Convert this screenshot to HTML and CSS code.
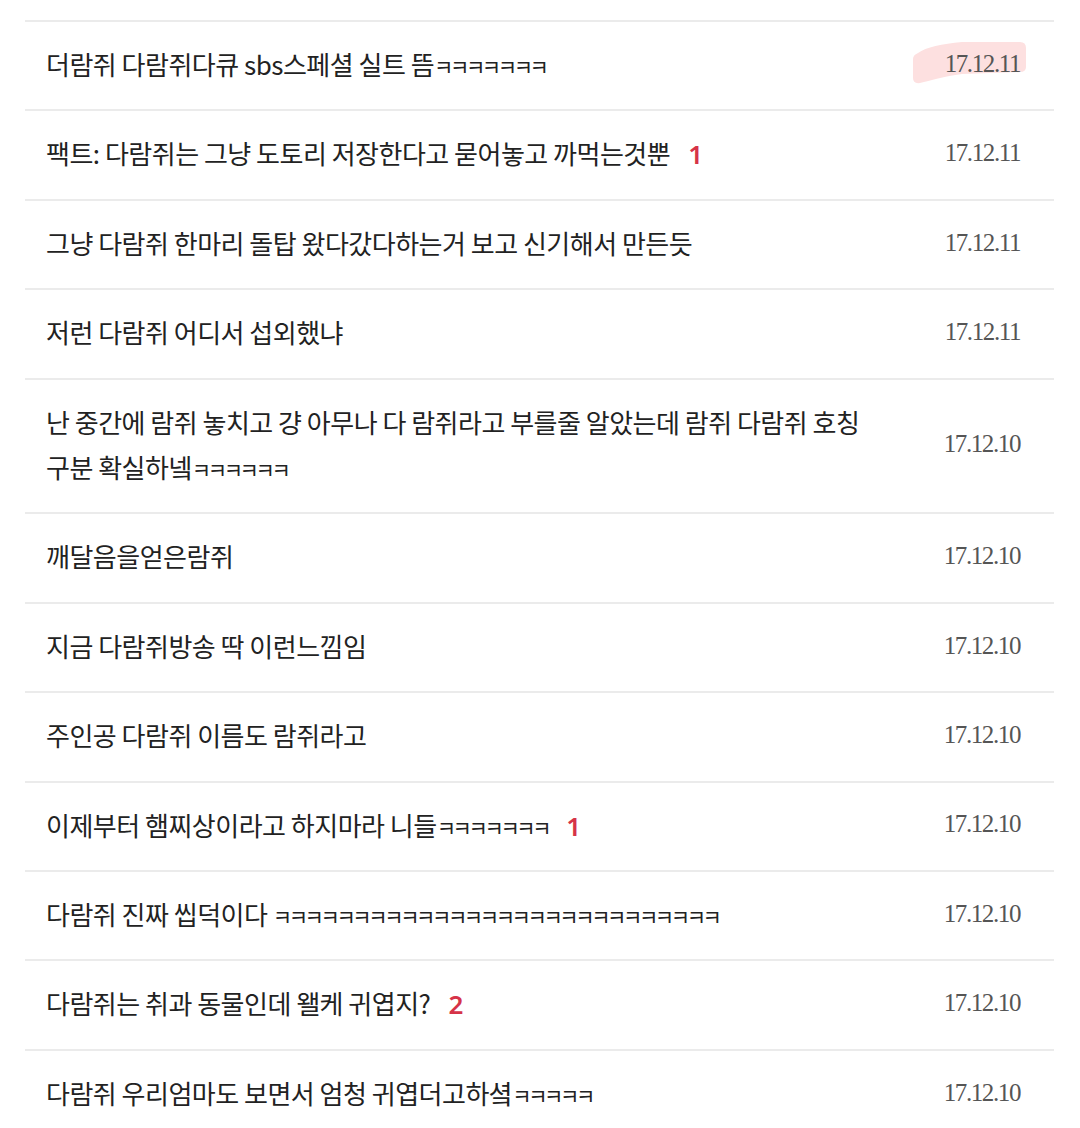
FILE: index.html
```html
<!DOCTYPE html>
<html>
<head>
	<meta charset="UTF-8" />
	<title>다람쥐 게시판</title>
	<link rel="stylesheet" href="styles.css">
</head>
<body>
	<ul class="list">
		<li class="row">
			<span class="title">더람쥐 다람쥐다큐 sbs스페셜 실트 뜸<span class="kk">ㅋㅋㅋㅋㅋㅋㅋ</span></span>
			<span class="date marked">
				<svg class="mark" width="116" height="44" viewBox="0 0 116 44"><path d="M6 12 C14 6 30 3 50 1 L108 1 Q114 1 114 7 L114 26 Q114 31 108 31 L50 33 C32 35 18 40 8 42 Q1 43 1 37 L1 18 Q1 14 6 12 Z" fill="#fde0e0"/></svg>
				<span class="num">17.12.11</span>
			</span>
		</li>
		<li class="row">
			<span class="title">팩트: 다람쥐는 그냥 도토리 저장한다고 묻어놓고 까먹는것뿐<b class="count">1</b></span>
			<span class="date">17.12.11</span>
		</li>
		<li class="row">
			<span class="title">그냥 다람쥐 한마리 돌탑 왔다갔다하는거 보고 신기해서 만든듯</span>
			<span class="date">17.12.11</span>
		</li>
		<li class="row">
			<span class="title">저런 다람쥐 어디서 섭외했냐</span>
			<span class="date">17.12.11</span>
		</li>
		<li class="row">
			<span class="title">난 중간에 람쥐 놓치고 걍 아무나 다 람쥐라고 부를줄 알았는데 람쥐 다람쥐 호칭<br>구분 확실하넼<span class="kk">ㅋㅋㅋㅋㅋㅋ</span></span>
			<span class="date">17.12.10</span>
		</li>
		<li class="row">
			<span class="title">깨달음을얻은람쥐</span>
			<span class="date">17.12.10</span>
		</li>
		<li class="row">
			<span class="title">지금 다람쥐방송 딱 이런느낌임</span>
			<span class="date">17.12.10</span>
		</li>
		<li class="row">
			<span class="title">주인공 다람쥐 이름도 람쥐라고</span>
			<span class="date">17.12.10</span>
		</li>
		<li class="row">
			<span class="title">이제부터 햄찌상이라고 하지마라 니들<span class="kk">ㅋㅋㅋㅋㅋㅋㅋ</span><b class="count">1</b></span>
			<span class="date">17.12.10</span>
		</li>
		<li class="row">
			<span class="title">다람쥐 진짜 씹덕이다 <span class="kk">ㅋㅋㅋㅋㅋㅋㅋㅋㅋㅋㅋㅋㅋㅋㅋㅋㅋㅋㅋㅋㅋㅋㅋㅋㅋㅋㅋㅋ</span></span>
			<span class="date">17.12.10</span>
		</li>
		<li class="row">
			<span class="title">다람쥐는 취과 동물인데 왤케 귀엽지?<b class="count">2</b></span>
			<span class="date">17.12.10</span>
		</li>
		<li class="row">
			<span class="title">다람쥐 우리엄마도 보면서 엄청 귀엽더고하셬<span class="kk">ㅋㅋㅋㅋㅋ</span></span>
			<span class="date">17.12.10</span>
		</li>
	</ul>
</body>
</html>
```
FILE: styles.css
```css
body {
	margin: 0;
	background: #fff;
	font-family: "Noto Sans CJK KR", "Noto Sans", sans-serif;
	color: #222;
}
.list {
	list-style: none;
	margin: 0 26px 0 25px;
	padding: 20px 0 0;
}
.row {
	display: flex;
	align-items: center;
	justify-content: space-between;
	border-top: 2px solid #ebebeb;
	padding: 19px 34px 23px 21px;
}
.title {
	font-size: 26px;
	line-height: 45.4px;
	letter-spacing: -0.5px;
}
/* ㅋ runs are drawn tight and small, like the handwriting font */
.kk {
	font-size: 21px;
	line-height: 1;
	letter-spacing: -3.4px;
}
.count {
	color: #d63348;
	font-family: "Noto Sans", sans-serif;
	font-weight: 600;
	line-height: 1;
	margin-left: 18px;
}
.date {
	font-family: "Liberation Serif", serif;
	font-size: 25px;
	letter-spacing: -1.4px;
	color: #555;
	white-space: nowrap;
}
.date.marked {
	position: relative;
}
.date .mark {
	position: absolute;
	left: -33px;
	top: -9px;
}
.date .num {
	position: relative;
}
```
